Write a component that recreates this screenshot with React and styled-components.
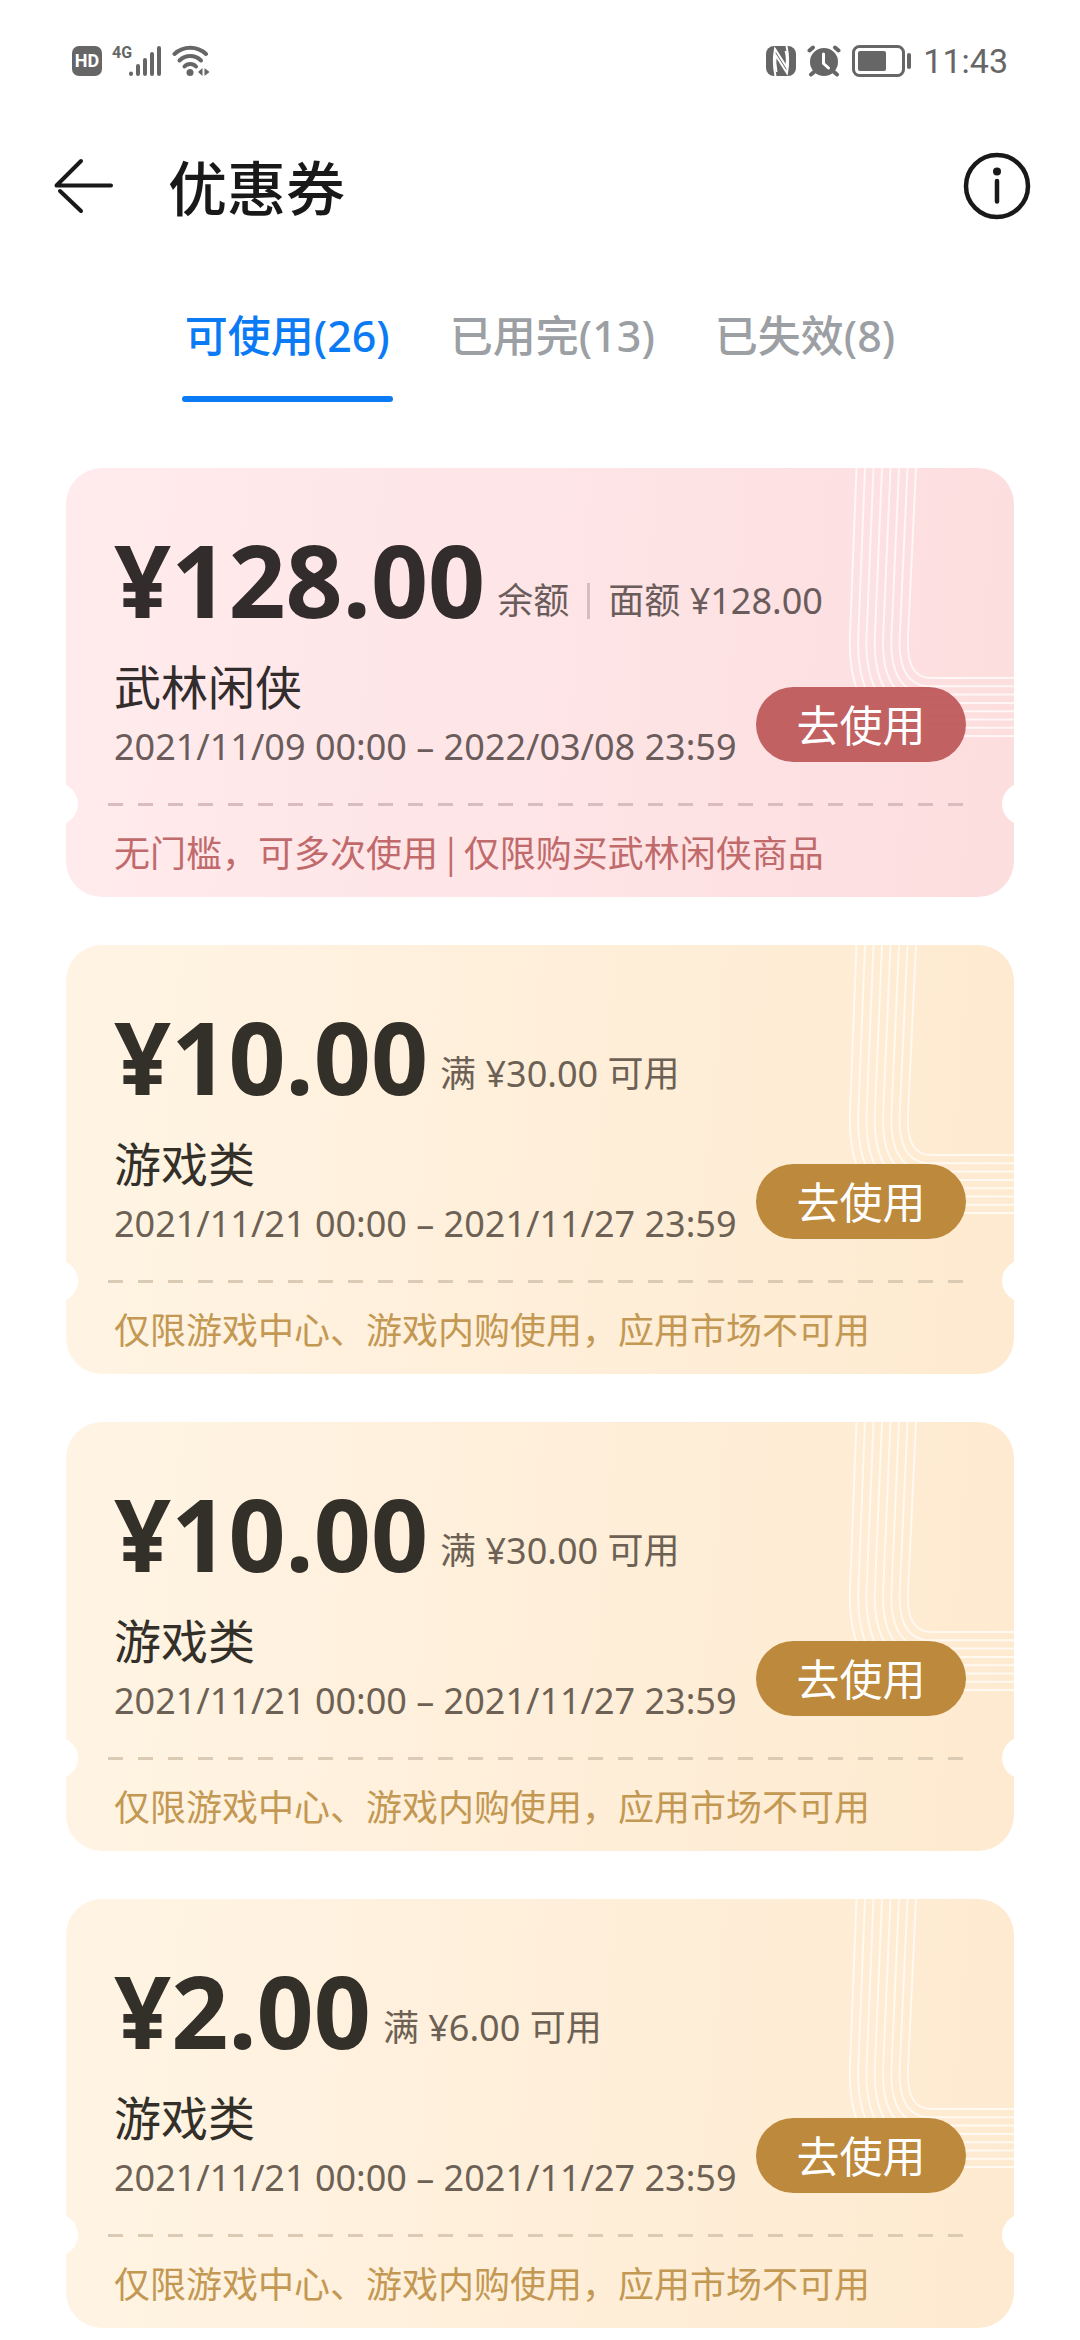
import React, { useState } from 'react'
import styled, { createGlobalStyle, ThemeProvider } from 'styled-components'

const theme = {
  text: '#191919',
  status: '#666666',
  active: '#0a7bf5',
  muted: '#9c9fa3',
  red: {
    from: '#ffebed',
    to: '#fddedf',
    price: '#332c2c',
    meta: '#6b5c5c',
    line: '#d9bdbe',
    note: '#c16a6b',
    button: 'rgba(192, 93, 94, 0.97)',
  },
  gold: {
    from: '#fff4e4',
    to: '#feead0',
    price: '#332f29',
    meta: '#6c6154',
    line: '#dbcbb5',
    note: '#c39852',
    button: 'rgba(187, 133, 55, 0.97)',
  },
}

const tabs = [
  { id: 'available', title: '可使用(26)' },
  { id: 'used', title: '已用完(13)' },
  { id: 'expired', title: '已失效(8)' },
]

const coupons = [
  {
    id: 1,
    tone: 'red',
    price: '¥128.00',
    details: ['余额', '面额 ¥128.00'],
    name: '武林闲侠',
    period: '2021/11/09 00:00 – 2022/03/08 23:59',
    note: '无门槛，可多次使用 | 仅限购买武林闲侠商品',
  },
  {
    id: 2,
    tone: 'gold',
    price: '¥10.00',
    details: ['满 ¥30.00 可用'],
    name: '游戏类',
    period: '2021/11/21 00:00 – 2021/11/27 23:59',
    note: '仅限游戏中心、游戏内购使用，应用市场不可用',
  },
  {
    id: 3,
    tone: 'gold',
    price: '¥10.00',
    details: ['满 ¥30.00 可用'],
    name: '游戏类',
    period: '2021/11/21 00:00 – 2021/11/27 23:59',
    note: '仅限游戏中心、游戏内购使用，应用市场不可用',
  },
  {
    id: 4,
    tone: 'gold',
    price: '¥2.00',
    details: ['满 ¥6.00 可用'],
    name: '游戏类',
    period: '2021/11/21 00:00 – 2021/11/27 23:59',
    note: '仅限游戏中心、游戏内购使用，应用市场不可用',
  },
]

const tone = key => p => p.theme[p.$tone][key]

const GlobalStyle = createGlobalStyle`
  * {
    box-sizing: border-box;
  }
  body {
    margin: 0;
    background: #ffffff;
    font-family: 'Noto Sans', 'Noto Sans CJK SC', sans-serif;
  }
  button {
    padding: 0;
    border: 0;
    background: none;
    font-family: inherit;
    cursor: pointer;
  }
  svg {
    display: block;
  }
`

const StatusBar = styled.div`
  display: flex;
  align-items: center;
  justify-content: space-between;
  height: 122px;
  padding: 0 72px;
  color: ${p => p.theme.status};
`

const StatusGroup = styled.div`
  display: flex;
  align-items: center;
  gap: ${p => p.$gap}px;
`

const HdBadge = styled.span`
  width: 30px;
  height: 30px;
  border-radius: 7px;
  background: ${p => p.theme.status};
  color: #ffffff;
  font: bold 18px/30px Roboto, sans-serif;
  text-align: center;
`

const Signal = styled.div`
  display: flex;
  align-items: flex-start;
`

const Network = styled.span`
  margin-right: -4px;
  font: bold 16px/16px Roboto, sans-serif;
`

const Clock = styled.span`
  font-family: Roboto, sans-serif;
  font-size: 34px;
  line-height: 40px;
`

const Header = styled.header`
  display: flex;
  align-items: center;
  height: 128px;
  padding: 0 48px 0 52px;
`

const Title = styled.h1`
  flex: 1;
  margin: 0 0 0 52px;
  padding-top: 4px;
  color: ${p => p.theme.text};
  font-size: 59px;
  font-weight: 500;
  line-height: 80px;
`

const TabList = styled.div`
  display: flex;
  justify-content: center;
  gap: 54px;
  padding: 52px 0 66px;
`

const Tab = styled.button`
  display: flex;
  flex-direction: column;
  color: ${p => (p.$active ? p.theme.active : p.theme.muted)};
  font-size: 43px;
  font-weight: 500;
  line-height: 68px;

  &::after {
    content: '';
    width: 100%;
    height: 6px;
    margin-top: 26px;
    border-radius: 3px;
    background: ${p => (p.$active ? p.theme.active : 'transparent')};
  }
`

const TabText = styled.span`
  padding: 0 3px;
`

const CouponList = styled.main`
  display: flex;
  flex-direction: column;
  gap: 48px;
  padding: 0 66px 12px;
`

const Card = styled.article`
  position: relative;
  overflow: hidden;
  border-radius: 36px;
  background: linear-gradient(95deg, ${tone('from')}, ${tone('to')});
`

const Pattern = styled.svg`
  position: absolute;
  top: 0;
  right: 0;
`

const Content = styled.div`
  position: relative;
  padding: 61px 48px 12px;
`

const PriceRow = styled.div`
  display: flex;
  align-items: flex-end;
  gap: 12px;
`

const Price = styled.strong`
  color: ${tone('price')};
  font-size: 100px;
  font-weight: 700;
  line-height: 100px;
`

const Details = styled.div`
  display: flex;
  align-items: center;
  margin-bottom: ${p => (p.$split ? 4 : 8)}px;
  color: ${tone('meta')};
  font-size: 36px;
  line-height: 48px;
`

const Detail = styled.span`
  & + & {
    display: flex;
    align-items: center;
  }

  & + &::before {
    content: '';
    width: 3px;
    height: 36px;
    margin: 0 18px;
    background: ${tone('line')};
  }
`

const InfoRow = styled.div`
  display: flex;
  align-items: flex-end;
  justify-content: space-between;
  margin-top: 28px;
`

const Name = styled.h2`
  margin: 0 0 6px;
  color: ${tone('price')};
  font-size: 47px;
  font-weight: 400;
  line-height: 60px;
`

const Period = styled.div`
  color: ${tone('meta')};
  font-size: 36px;
  line-height: 48px;
  white-space: nowrap;
`

const UseButton = styled.button`
  flex: none;
  width: 210px;
  height: 75px;
  margin-bottom: 9px;
  padding-top: 2px;
  border-radius: 38px;
  background: ${tone('button')};
  color: #ffffff;
  font-size: 43px;
  font-weight: 400;
  line-height: 73px;
`

const Divider = styled.div`
  display: flex;
  align-items: center;
  height: 42px;
  margin: 0 -30px;

  &::before,
  &::after {
    content: '';
    flex: none;
    width: 42px;
    height: 42px;
    border-radius: 50%;
    background: #ffffff;
  }
`

const Dashes = styled.div`
  flex: 1;
  height: 3px;
  margin: 0 36px 0 30px;
  background: repeating-linear-gradient(
    90deg,
    ${tone('line')} 0 15px,
    transparent 15px 30px
  );
`

const Note = styled.p`
  margin: 0;
  padding: 2px 48px 22px;
  color: ${tone('note')};
  font-family: 'Noto Sans CJK SC', sans-serif;
  font-size: 36px;
  line-height: 48px;
`

const SignalIcon = () => (
  <svg width="34" height="32" viewBox="0 0 34 32" fill="none" aria-hidden="true">
    <g stroke="currentColor" strokeWidth="4" strokeLinecap="round">
      <path d="M3 28.5v0.5M10 21v8M17 15v14M24 9v20M31 3v26" />
    </g>
  </svg>
)

const WifiIcon = () => (
  <svg width="38" height="32" viewBox="0 0 38 32" fill="none" aria-hidden="true">
    <g stroke="currentColor" strokeWidth="4" strokeLinecap="round">
      <path d="M2.5 9C11.5 0.8 25 0.8 34 9" />
      <path d="M7.5 15.5C13.5 9.5 23 9.5 29 15.5" />
      <path d="M12.5 21.5C15.5 18.2 21 18.2 24 21.5" />
    </g>
    <circle cx="18" cy="27.5" r="3.5" fill="currentColor" />
    <path d="M30.5 23v8l-4.500-4zM32.500 23v8l5-4z" fill="currentColor" />
  </svg>
)

const NfcIcon = () => (
  <svg width="30" height="32" viewBox="0 0 30 32" aria-hidden="true">
    <rect y="1" width="30" height="30" rx="8" fill="currentColor" />
    <g fill="none" stroke="#ffffff" strokeWidth="2">
      <path d="M9.5 31C7.5 22 7.5 12 9 4L20.5 22C21 16 21 10 19.5 6" />
      <path d="M20.5 1C22.5 10 22.5 20 21 28L9.5 10C9 16 9.5 22 10.5 27" />
    </g>
  </svg>
)

const AlarmIcon = () => (
  <svg width="34" height="32" viewBox="0 0 34 32" fill="none" aria-hidden="true">
    <circle cx="17" cy="17" r="14" fill="currentColor" />
    <path
      d="M1 9.5L10.500 2M33 9.5L23.500 2"
      stroke="#ffffff"
      strokeWidth="3"
    />
    <g stroke="currentColor" strokeWidth="4" strokeLinecap="round">
      <path d="M2.5 5.5L6 2.500M31.500 5.500L28 2.500M7 27l-3 2.500M27 27l3 2.500" />
    </g>
    <path
      d="M16.5 9v9.500l5 4.500"
      stroke="#ffffff"
      strokeWidth="3"
      strokeLinecap="round"
      strokeLinejoin="round"
    />
  </svg>
)

const BatteryIcon = () => (
  <svg width="60" height="32" viewBox="0 0 60 32" aria-hidden="true">
    <rect
      x="1.5"
      y="1.5"
      width="50"
      height="29"
      rx="6"
      fill="none"
      stroke="currentColor"
      strokeWidth="3"
    />
    <rect x="6" y="6" width="28" height="20" rx="2" fill="currentColor" />
    <rect x="55" y="8" width="4" height="16" rx="2" fill="currentColor" />
  </svg>
)

const BackIcon = () => (
  <svg width="64" height="60" viewBox="0 0 64 60" fill="none" aria-hidden="true">
    <g stroke="#191919" strokeWidth="4" strokeLinecap="round">
      <path d="M29 5L4.5 29.5H59" strokeLinejoin="round" />
      <path d="M8 35l21 20" />
    </g>
  </svg>
)

const InfoIcon = () => (
  <svg width="70" height="70" viewBox="0 0 70 70" fill="none" aria-hidden="true">
    <circle cx="35" cy="35" r="31" stroke="#191919" strokeWidth="4.5" />
    <circle cx="35" cy="20.5" r="4" fill="#191919" />
    <path d="M35 30v20.5" stroke="#191919" strokeWidth="4.5" strokeLinecap="round" />
  </svg>
)

const lanes = [0, 1, 2, 3, 4, 5, 6, 7]

const CardPattern = () => (
  <Pattern width="174" height="275" viewBox="0 0 174 275" fill="none" aria-hidden="true">
    <g stroke="#ffffff" strokeOpacity="0.7" strokeWidth="2">
      {lanes.map(i => {
        const top = 76 - i * 8.5
        const side = 67 - i * 8.3
        const base = 210 + i * 8.3
        return (
          <path
            key={i}
            d={`M${top} 0L${side + 1} 170Q${side - 1} ${base} 91 ${base}H174`}
          />
        )
      })}
    </g>
  </Pattern>
)

const Coupon = ({ coupon }) => (
  <Card $tone={coupon.tone}>
    <CardPattern />
    <Content>
      <PriceRow>
        <Price $tone={coupon.tone}>{coupon.price}</Price>
        <Details $tone={coupon.tone} $split={coupon.details.length > 1}>
          {coupon.details.map(detail => (
            <Detail key={detail} $tone={coupon.tone}>
              {detail}
            </Detail>
          ))}
        </Details>
      </PriceRow>
      <InfoRow>
        <div>
          <Name $tone={coupon.tone}>{coupon.name}</Name>
          <Period $tone={coupon.tone}>{coupon.period}</Period>
        </div>
        <UseButton type="button" $tone={coupon.tone}>
          去使用
        </UseButton>
      </InfoRow>
    </Content>
    <Divider>
      <Dashes $tone={coupon.tone} />
    </Divider>
    <Note $tone={coupon.tone}>{coupon.note}</Note>
  </Card>
)

const App = () => {
  const [activeTab, setActiveTab] = useState('available')

  return (
    <ThemeProvider theme={theme}>
      <GlobalStyle />
      <StatusBar>
        <StatusGroup $gap={10}>
          <HdBadge>HD</HdBadge>
          <Signal>
            <Network>4G</Network>
            <SignalIcon />
          </Signal>
          <WifiIcon />
        </StatusGroup>
        <StatusGroup $gap={11}>
          <NfcIcon />
          <AlarmIcon />
          <BatteryIcon />
          <Clock>11:43</Clock>
        </StatusGroup>
      </StatusBar>
      <Header>
        <button type="button" aria-label="返回">
          <BackIcon />
        </button>
        <Title>优惠券</Title>
        <button type="button" aria-label="说明">
          <InfoIcon />
        </button>
      </Header>
      <TabList role="tablist">
        {tabs.map(tab => (
          <Tab
            key={tab.id}
            type="button"
            role="tab"
            aria-selected={tab.id === activeTab}
            $active={tab.id === activeTab}
            onClick={() => setActiveTab(tab.id)}
          >
            <TabText>{tab.title}</TabText>
          </Tab>
        ))}
      </TabList>
      <CouponList>
        {coupons.map(coupon => (
          <Coupon key={coupon.id} coupon={coupon} />
        ))}
      </CouponList>
    </ThemeProvider>
  )
}

export default App
